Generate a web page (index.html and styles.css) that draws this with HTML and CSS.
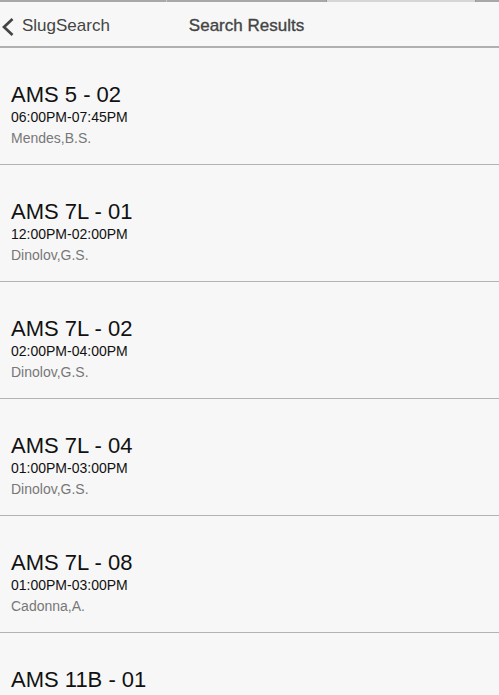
FILE: index.html
```html
<!DOCTYPE html>
<html lang="en">
<head>
<meta charset="utf-8">
<title>Search Results</title>
<link rel="stylesheet" href="styles.css">
</head>
<body>
<div class="tabstrip">
  <div class="seg seg-a"></div>
  <div class="seg seg-b"></div>
  <div class="seg seg-c"></div>
  <div class="seg seg-d"></div>
</div>
<header class="navbar">
  <div class="back">
    <svg class="chev" width="13" height="18" viewBox="0 0 13 18"><polyline points="11.5,1 3,9 11.5,17" fill="none" stroke="#444" stroke-width="2.7" stroke-linecap="butt" stroke-linejoin="miter"/></svg>
    <span class="back-label">SlugSearch</span>
  </div>
  <div class="nav-title">Search Results</div>
  <div class="nav-spacer"></div>
</header>
<ul class="results">
  <li class="result">
    <div class="course">AMS 5 - 02</div>
    <div class="time">06:00PM-07:45PM</div>
    <div class="instructor">Mendes,B.S.</div>
  </li>
  <li class="result">
    <div class="course">AMS 7L - 01</div>
    <div class="time">12:00PM-02:00PM</div>
    <div class="instructor">Dinolov,G.S.</div>
  </li>
  <li class="result">
    <div class="course">AMS 7L - 02</div>
    <div class="time">02:00PM-04:00PM</div>
    <div class="instructor">Dinolov,G.S.</div>
  </li>
  <li class="result">
    <div class="course">AMS 7L - 04</div>
    <div class="time">01:00PM-03:00PM</div>
    <div class="instructor">Dinolov,G.S.</div>
  </li>
  <li class="result">
    <div class="course">AMS 7L - 08</div>
    <div class="time">01:00PM-03:00PM</div>
    <div class="instructor">Cadonna,A.</div>
  </li>
  <li class="result">
    <div class="course">AMS 11B - 01</div>
  </li>
</ul>
</body>
</html>
```
FILE: styles.css
```css
html, body {
  margin: 0;
  padding: 0;
  background: #f7f7f7;
  font-family: "Liberation Sans", Arial, Helvetica, sans-serif;
  overflow: hidden;
}
.tabstrip {
  display: flex;
  height: 2px;
  background: #a8a8a8;
}
.seg { height: 2px; }
.seg-a { width: 166px; background: #a8a8a8; border-right: 1px solid #c8c8c8; }
.seg-b { width: 159px; background: #a8a8a8; border-right: 1px solid #999; }
.seg-c { width: 148px; background: #d6d6d6; border-right: 1px solid #999; }
.seg-d { flex: 1; background: #a8a8a8; }

.navbar {
  display: grid;
  grid-template-columns: 1fr auto 1fr;
  align-items: start;
  height: 44px;
  border-bottom: 2px solid #b0b0b0;
  box-sizing: content-box;
}
.back {
  display: flex;
  align-items: flex-start;
  padding-top: 14px;
  color: #444;
}
.chev {
  display: block;
  margin-left: 1px;
  margin-top: 2px;
  margin-right: 8px;
}
.back-label {
  font-size: 17px;
  line-height: 20px;
}
.nav-title {
  padding-top: 14px;
  padding-right: 6px;
  font-size: 17px;
  line-height: 20px;
  color: #444;
  -webkit-text-stroke: 0.35px #444;
}
.results {
  list-style: none;
  margin: 0;
  padding: 0;
}
.result {
  padding: 33px 11px 18px;
  border-bottom: 1px solid #b3b3b3;
}
.course {
  font-size: 22px;
  line-height: 27px;
  color: #111;
}
.time {
  margin-top: 1px;
  font-size: 14px;
  line-height: 16px;
  color: #111;
}
.instructor {
  margin-top: 5px;
  font-size: 14px;
  line-height: 16px;
  color: #777;
}
```
